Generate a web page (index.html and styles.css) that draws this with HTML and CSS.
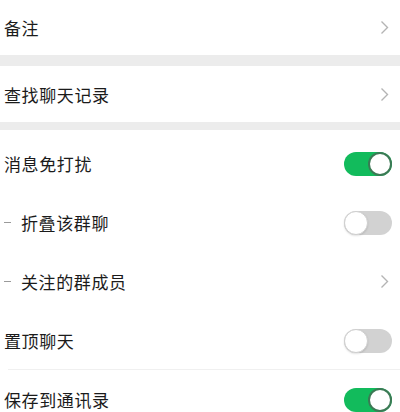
FILE: index.html
```html
<!DOCTYPE html>
<html lang="zh-CN">
<head>
  <meta charset="UTF-8">
  <meta name="viewport" content="width=device-width, initial-scale=1.0">
  <title>聊天信息</title>
  <link rel="stylesheet" href="styles.css">
</head>
<body>
  <div class="group first">
    <div class="row">
      <span class="label">备注</span>
      <svg class="arrow" viewBox="0 0 9 15"><path d="M1.5 1.5 L7.5 7.5 L1.5 13.5" /></svg>
    </div>
  </div>

  <div class="group">
    <div class="row">
      <span class="label">查找聊天记录</span>
      <svg class="arrow" viewBox="0 0 9 15"><path d="M1.5 1.5 L7.5 7.5 L1.5 13.5" /></svg>
    </div>
  </div>

  <div class="group last">
    <div class="row">
      <span class="label">消息免打扰</span>
      <span class="switch on"></span>
    </div>
    <div class="row sub">
      <span class="dash"></span>
      <span class="label">折叠该群聊</span>
      <span class="switch"></span>
    </div>
    <div class="row sub">
      <span class="dash"></span>
      <span class="label">关注的群成员</span>
      <svg class="arrow" viewBox="0 0 9 15"><path d="M1.5 1.5 L7.5 7.5 L1.5 13.5" /></svg>
    </div>
    <div class="row line">
      <span class="label">置顶聊天</span>
      <span class="switch"></span>
    </div>
    <div class="row">
      <span class="label">保存到通讯录</span>
      <span class="switch on"></span>
    </div>
  </div>
</body>
</html>
```

FILE: styles.css
```css
body {
  margin: 0;
  background: #ececec;
  font-family: "Noto Sans CJK SC", "Noto Sans", sans-serif;
  color: #1b1b1b;
}

.group {
  background: #fff;
  margin-bottom: 10px;
}

.group.first {
  margin-bottom: 11px;
}

.group.first .row {
  height: 55px;
}

.group.first + .group {
  margin-bottom: 8px;
}

.group.first + .group .row {
  height: 56px;
}

.group.last {
  padding-top: 4px;
  margin-bottom: 0;
}

.group.last .row {
  height: 59px;
}

.row {
  display: flex;
  align-items: center;
  height: 60px;
  padding: 0 8px 0 4px;
  box-sizing: border-box;
}

/* thin divider under a row, inset from the left */
.row.line {
  background: linear-gradient(#f0f0f0, #f0f0f0) 8px 100% / calc(100% - 8px) 1px no-repeat;
}

.label {
  flex: 1;
  font-size: 17px;
  letter-spacing: 0.6px;
}

.dash {
  width: 7px;
  height: 1px;
  background: #9a9a9a;
  margin-right: 10px;
}

.arrow {
  width: 9px;
  height: 15px;
  margin-right: 3px;
  fill: none;
  stroke: #b4b4b4;
  stroke-width: 1.4;
}

/* toggle switch */
.switch {
  position: relative;
  width: 48px;
  height: 24px;
  border-radius: 12px;
  background: #d2d2d2;
  box-sizing: border-box;
}

.switch::after {
  content: '';
  position: absolute;
  top: 0;
  left: 0;
  width: 24px;
  height: 24px;
  border-radius: 50%;
  background: #fff;
  border: 1px solid #cfcfcf;
  box-sizing: border-box;
  box-shadow: 0 1px 2px rgba(0, 0, 0, 0.12);
}

.switch.on {
  background: #12bb5c;
}

.switch.on::after {
  left: 24px;
  border: 2px solid #3c7a55;
  box-shadow: none;
}
```
